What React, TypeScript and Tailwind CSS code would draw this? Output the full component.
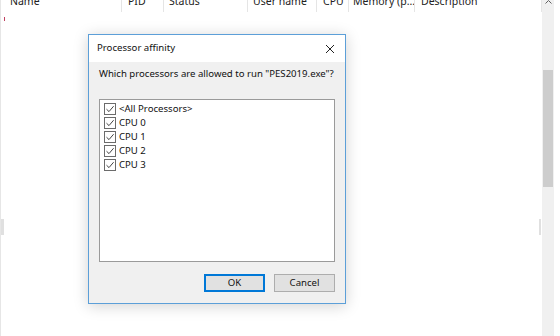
import React from "react";

const columns = [
  { label: "Name", w: "w-[121px]", pl: "pl-[9px]" },
  { label: "PID", w: "w-[42px]", pl: "pl-[6px]" },
  { label: "Status", w: "w-[84px]", pl: "pl-[5px]" },
  { label: "User name", w: "w-[69px]", pl: "pl-[5px]" },
  { label: "CPU", w: "w-[32px]", pl: "pl-[6px]" },
  { label: "Memory (p...", w: "w-[66px]", pl: "pl-[4px]" },
  { label: "Description", w: "w-[127px]", pl: "pl-[6px]" },
];

const cpus = ["<All Processors>", "CPU 0", "CPU 1", "CPU 2", "CPU 3"];

function CheckBox() {
  return (
    <span className="flex h-[12px] w-[12px] items-center justify-center border border-[#6b6b6b] bg-white">
      <svg width="10" height="10" viewBox="0 0 10 10">
        <path d="M1.5 5.2 L4 7.6 L8.6 2.2" fill="none" stroke="#444" strokeWidth="1" />
      </svg>
    </span>
  );
}

function AffinityDialog() {
  return (
    <div className="absolute left-[88px] top-[34px] flex h-[270px] w-[258px] flex-col border border-[#5c9fd8] bg-[#f0f0f0] shadow-[0_2px_14px_rgba(0,0,0,0.18)]">
      {/* title bar */}
      <div className="flex h-[27px] items-center justify-between bg-white pl-[8px] pr-[10px]">
        <span className="text-[9.6px] text-[#111]">Processor affinity</span>
        <svg width="10" height="10" viewBox="0 0 10 10">
          <path d="M1 1 L9 9 M9 1 L1 9" stroke="#222" strokeWidth="1" />
        </svg>
      </div>

      <div className="flex flex-1 flex-col px-[10px] pt-[5px]">
        <p className="text-[9.6px] text-[#111]">
          Which processors are allowed to run "PES2019.exe"?
        </p>

        <div className="mt-[18px] h-[163px] border border-[#9a9a9a] bg-white pl-[4px] pt-[2px]">
          {cpus.map((c) => (
            <div key={c} className="flex h-[14px] items-center gap-[3px]">
              <CheckBox />
              <span className="text-[9.6px] text-[#111]">{c}</span>
            </div>
          ))}
        </div>

        <div className="mt-[12px] flex justify-end gap-[9px]">
          <button className="h-[18px] w-[61px] border border-[#0078d7] bg-[#e1e1e1] text-[9.6px] text-[#111] shadow-[inset_0_0_0_1px_#0078d7]">
            OK
          </button>
          <button className="h-[18px] w-[61px] border border-[#adadad] bg-[#e1e1e1] text-[9.6px] text-[#111]">
            Cancel
          </button>
        </div>
      </div>
    </div>
  );
}

export default function App() {
  return (
    <div
      className="relative flex h-[336px] w-[560px] overflow-hidden bg-white"
      style={{ fontFamily: '"Segoe UI", "Noto Sans", "Open Sans", sans-serif' }}
    >
      {/* task manager list */}
      <div className="relative flex-1 border-l border-[#e6e6e6]">
        <div className="-mt-[6px] flex h-[18px]">
          {columns.map((c) => (
            <div
              key={c.label}
              className={`${c.w} ${c.pl} shrink-0 overflow-hidden whitespace-nowrap border-r border-[#e5e5e5] text-[10.5px] leading-[14px] text-[#222]`}
            >
              {c.label}
            </div>
          ))}
        </div>
        <div className="ml-[3px] mt-[5px] h-[4px] w-[1px] bg-[#c04060]" />
        <div className="absolute left-0 top-[219px] h-[16px] w-[3px] bg-[#e0e0e0]" />
        <div className="absolute right-[1px] top-[219px] h-[16px] w-[2px] bg-[#e0e0e0]" />
      </div>

      {/* vertical scrollbar */}
      <div className="flex w-[13px] flex-col bg-[#f0f0f0]">
        <div className="flex h-[6px] items-start justify-center">
          <svg width="7" height="4" viewBox="0 0 7 4">
            <path d="M0.5 3.5 L3.5 0.5 L6.5 3.5" fill="none" stroke="#606060" strokeWidth="1" />
          </svg>
        </div>
        <div className="mx-[1px] mt-[64px] h-[117px] bg-[#cdcdcd]" />
      </div>
      <div className="w-[6px] bg-white" />

      <AffinityDialog />
    </div>
  );
}
